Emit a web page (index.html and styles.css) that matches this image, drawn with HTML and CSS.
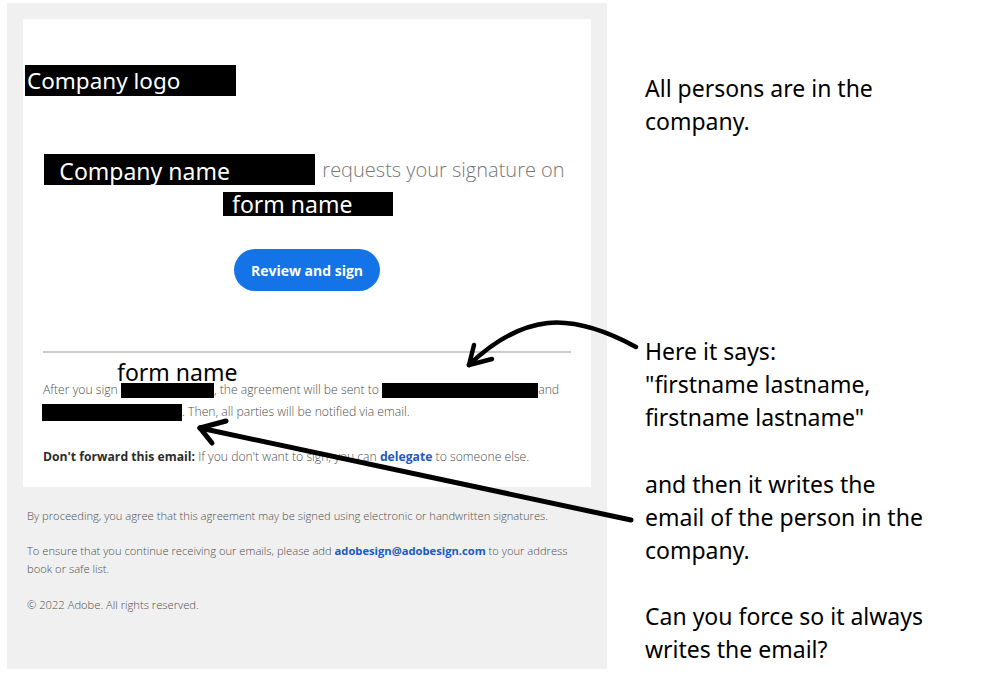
FILE: index.html
```html
<!DOCTYPE html>
<html>
<head>
<meta charset="utf-8">
<link rel="stylesheet" href="styles.css">
</head>
<body>
<div class="page">
  <div class="email">
    <div class="card">
      <div class="logo">Company logo</div>
      <div class="title">
        <span class="name-box">Company name</span>
        <span class="requests">requests your signature on</span>
      </div>
      <div class="form-box">form name</div>
      <div class="btn-row"><span class="btn">Review and sign</span></div>
      <div class="divider"></div>
      <p class="body-text">After you sign <span class="redact r1"></span>, the agreement will be sent to <span class="redact r2"></span>and <span class="redact r3"></span>. Then, all parties will be notified via email.</p>
      <p class="forward"><b>Don't forward this email:</b> If you don't want to sign, you can <span class="link">delegate</span> to someone else.</p>
      <div class="note-form">form name</div>
    </div>
    <div class="foot">
      <p class="f1">By proceeding, you agree that this agreement may be signed using electronic or handwritten signatures.</p>
      <p class="f2">To ensure that you continue receiving our emails, please add <span class="link">adobesign@adobesign.com</span> to your address<br>book or safe list.</p>
      <p class="f3">© 2022 Adobe. All rights reserved.</p>
    </div>
  </div>
  <div class="notes">
    <p class="n1">All persons are in the<br>company.</p>
    <p class="n2">Here it says:<br>"firstname lastname,<br>firstname lastname"</p>
    <p class="n3">and then it writes the<br>email of the person in the<br>company.</p>
    <p class="n4">Can you force so it always<br>writes the email?</p>
  </div>
</div>
<svg class="arrows" width="993" height="689" viewBox="0 0 993 689">
  <g fill="none" stroke="#000" stroke-width="4.5" stroke-linecap="round" stroke-linejoin="round">
    <path d="M636 347 C612 334 580 320 548 323 C520 326 492 343 469 365"/>
    <path d="M469 365 L474 345"/>
    <path d="M469 365 L492 359"/>
  </g>
  <g fill="none" stroke="#000" stroke-width="5" stroke-linecap="round" stroke-linejoin="round">
    <path d="M631 520 L200 428"/>
    <path d="M200 428 L226 421"/>
    <path d="M200 428 L212 443"/>
  </g>
</svg>
</body>
</html>
```

FILE: styles.css
```css
body {
  margin: 0;
  background: #fff;
}
.page {
  display: flex;
  align-items: flex-start;
}
.email {
  margin: 3px 0 0 7px;
  width: 600px;
  height: 666px;
  background: #f0f0f0;
  padding: 16px 16px 0;
  box-sizing: border-box;
  flex-shrink: 0;
}
.card {
  background: #fff;
  height: 468px;
  position: relative;
  font-family: "Open Sans", sans-serif;
  overflow: hidden;
}
.logo {
  margin: 46px 0 0 2px;
  width: 211px;
  height: 31px;
  background: #000;
  color: #fff;
  font-family: "Noto Sans", sans-serif;
  font-size: 22.5px;
  line-height: 32px;
  padding-left: 2px;
  box-sizing: border-box;
}
.title {
  margin-top: 58px;
  height: 31px;
  display: flex;
  justify-content: center;
  align-items: center;
  gap: 7px;
  padding-right: 5px;
}
.name-box {
  width: 271px;
  height: 31px;
  flex-shrink: 0;
  background: #000;
  color: #fff;
  font-family: "Noto Sans", sans-serif;
  font-size: 23px;
  line-height: 34px;
  padding-left: 15px;
  box-sizing: border-box;
}
.requests {
  font-size: 20px;
  font-weight: 300;
  color: #777;
  white-space: nowrap;
}
.form-box {
  margin: 7px auto 0;
  width: 170px;
  height: 24px;
  background: #000;
  color: #fff;
  font-family: "Noto Sans", sans-serif;
  font-size: 23px;
  line-height: 25px;
  padding-left: 9px;
  box-sizing: border-box;
  position: relative;
  left: 1px;
  white-space: nowrap;
}
.btn-row {
  margin-top: 33px;
  display: flex;
  justify-content: center;
}
.btn {
  width: 146px;
  height: 42px;
  border-radius: 21px;
  background: #1473e6;
  color: #fff;
  font-weight: 700;
  font-size: 14px;
  display: flex;
  align-items: center;
  justify-content: center;
}
.divider {
  margin: 60px 20px 0;
  height: 2px;
  background: #cccccc;
}
.body-text {
  margin: 26px 20px 0;
  font-size: 12.2px;
  line-height: 22px;
  font-weight: 300;
  color: #4f4f4f;
}
.redact {
  display: inline-block;
  background: #000;
  vertical-align: middle;
}
.r1 { width: 93px; height: 15px; }
.r2 { width: 156px; height: 15px; }
.r3 { width: 140px; height: 17px; margin-left: -1px; }
.forward {
  margin: 23px 20px 0;
  font-size: 12.2px;
  line-height: 22px;
  font-weight: 300;
  color: #4f4f4f;
}
.forward b {
  font-weight: 700;
  color: #2c2c2c;
}
.link {
  color: #1a5bc4;
  font-weight: 700;
}
.note-form {
  position: absolute;
  left: 94px;
  top: 340px;
  font-family: "Noto Sans", sans-serif;
  font-size: 23px;
  line-height: 26px;
  color: #000;
}
.foot {
  padding: 0 10px 0 4px;
  font-family: "Open Sans", sans-serif;
  font-size: 11.2px;
  line-height: 18px;
  font-weight: 300;
  color: #4f4f4f;
}
.foot p { margin: 0; }
.foot .f1 { margin-top: 20px; }
.foot .f2 { margin-top: 17px; }
.foot .f3 { margin-top: 18px; }
.notes {
  margin-left: 38px;
  padding-top: 72px;
  font-family: "Noto Sans", sans-serif;
  font-size: 23px;
  line-height: 33px;
  color: #000;
  white-space: nowrap;
}
.notes p { margin: 0; }
.notes .n2 { margin-top: 197px; }
.notes .n3 { margin-top: 34px; }
.notes .n4 { margin-top: 33px; }
.arrows {
  position: absolute;
  left: 0;
  top: 0;
  pointer-events: none;
}
```
